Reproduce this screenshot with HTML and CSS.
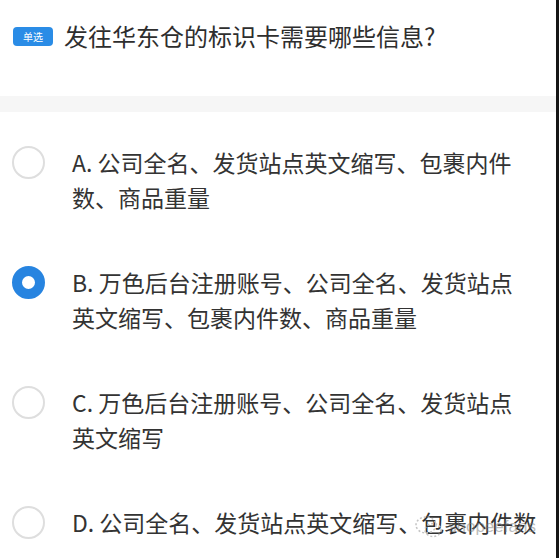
FILE: index.html
```html
<!DOCTYPE html>
<html lang="zh-CN">
<head>
    <meta charset="UTF-8">
    <meta name="viewport" content="width=device-width, initial-scale=1.0">
    <title>单选题</title>
    <link rel="stylesheet" href="styles.css">
</head>
<body>
    <div class="page">
        <div class="question">
            <span class="badge">单选</span>
            <span class="title">发往华东仓的标识卡需要哪些信息?</span>
        </div>
        <div class="band"></div>
        <div class="options">
            <div class="option">
                <span class="radio"></span>
                <span class="label">A. 公司全名、发货站点英文缩写、包裹内件数、商品重量</span>
            </div>
            <div class="option">
                <span class="radio checked"></span>
                <span class="label">B. 万色后台注册账号、公司全名、发货站点英文缩写、包裹内件数、商品重量</span>
            </div>
            <div class="option">
                <span class="radio"></span>
                <span class="label">C. 万色后台注册账号、公司全名、发货站点英文缩写</span>
            </div>
            <div class="option">
                <span class="radio"></span>
                <span class="label single">D. 公司全名、发货站点英文缩写、包裹内件数</span>
            </div>
        </div>
        <!-- watermark -->
        <div class="mark">
            <svg width="30" height="26" viewBox="0 0 30 26">
                <ellipse cx="12" cy="11" rx="10" ry="8" fill="none" stroke="#c4c4c4" stroke-width="1.5" stroke-dasharray="2 2"/>
                <ellipse cx="19" cy="16" rx="8" ry="6.5" fill="none" stroke="#c4c4c4" stroke-width="1.5" stroke-dasharray="2 2"/>
            </svg>
            <span>shopeefans</span>
        </div>
    </div>
</body>
</html>
```
FILE: styles.css
```css
body {
    margin: 0;
    background: #fff;
    font-family: "Noto Sans CJK SC", "Noto Sans", sans-serif;
    color: #333;
}

.page {
    position: relative;
    width: 556px;
    height: 558px;
    border-right: 3px solid #151515;
    overflow: hidden;
}

.question {
    display: flex;
    align-items: center;
    gap: 11px;
    height: 96px;
    padding-left: 13px;
    box-sizing: border-box;
    padding-bottom: 24px;
}

.badge {
    display: flex;
    align-items: center;
    justify-content: center;
    width: 40px;
    height: 19px;
    border-radius: 4px;
    background: #2a8ce6;
    color: #fff;
    font-size: 10px;
}

.title {
    font-size: 24px;
    line-height: 36px;
    color: #2e2e2e;
}

.band {
    height: 16px;
    background: #f6f6f6;
}

.options {
    display: flex;
    flex-direction: column;
    gap: 50px;
    padding-top: 33px;
}

.option {
    display: flex;
    align-items: flex-start;
    gap: 27px;
    padding-left: 12px;
}

.radio {
    flex: none;
    width: 33px;
    height: 33px;
    margin-top: 1px;
    border: 2px solid #dedede;
    border-radius: 50%;
    box-sizing: border-box;
}

.radio.checked {
    border: 10px solid #2784e0;
}

.label {
    width: 446px;
    font-size: 23px;
    line-height: 35px;
    color: #333;
}

.label.single {
    white-space: nowrap;
}

.mark {
    position: absolute;
    left: 414px;
    top: 514px;
    display: flex;
    align-items: flex-end;
    gap: 4px;
    color: rgba(120, 120, 120, 0.5);
    font-family: "Liberation Sans", sans-serif;
    font-size: 17px;
    line-height: 26px;
}
```
